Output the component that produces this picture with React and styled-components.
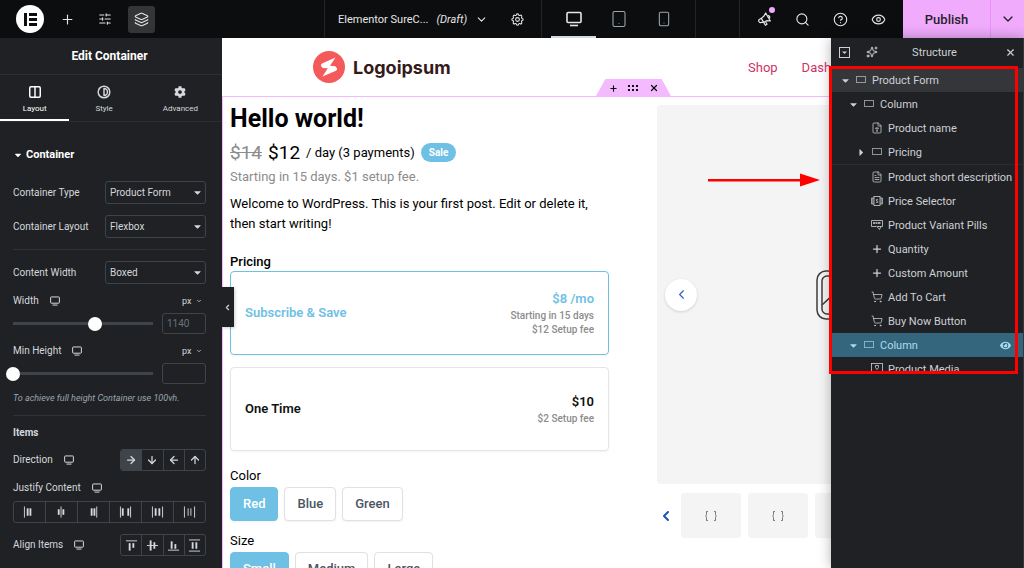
import { useState } from "react"
import styled, { createGlobalStyle } from "styled-components"
import {
    ArrowDown, ArrowLeft, ArrowRight, ArrowUp, ChevronDown, ChevronLeft, CircleQuestionMark, Columns2, Contrast,
    Eye, FileText, FileType, Layers, Plus, Search, ShoppingCart, SlidersHorizontal, Smartphone, Sparkles,
    Tablet, X
} from "lucide-react"
import { FaCaretDown, FaCaretRight, FaCog, FaEye } from "react-icons/fa"

const GlobalStyle = createGlobalStyle`
    * {
        box-sizing: border-box;
    }

    body {
        margin: 0;
        font-family: Roboto, "Liberation Sans", sans-serif;
        background-color: #fff;
    }

    button, input, select {
        font: inherit;
        color: inherit;
    }

    h1, h2, h3, p, ul {
        margin: 0;
        padding: 0;
    }

    svg {
        display: block;
        flex-shrink: 0;
    }
`

const JUSTIFY = [
    { name: "Start", bars: [[1, 0, 1, 12], [4, 2, 2, 8], [7, 2, 2, 8]] },
    { name: "Center", bars: [[3, 3, 2, 6], [6, 0, 1, 12], [8, 3, 2, 6]] },
    { name: "End", bars: [[4, 2, 2, 8], [7, 2, 2, 8], [10, 0, 1, 12]] },
    { name: "Space between", bars: [[1, 0, 1, 12], [3, 2, 2, 8], [9, 2, 2, 8], [12, 0, 1, 12]] },
    { name: "Space around", bars: [[1, 0, 1, 12], [4, 2, 2, 8], [8, 2, 2, 8], [12, 0, 1, 12]] },
    { name: "Space evenly", bars: [[1, 0, 1, 12], [5, 2, 1, 8], [8, 2, 1, 8], [12, 0, 1, 12]] }
]

const ALIGN = [
    { name: "Start", bars: [[1, 1, 12, 1], [4, 4, 2, 8], [8, 4, 2, 5]] },
    { name: "Center", bars: [[1, 6, 12, 1], [4, 1, 2, 11], [8, 3, 2, 7]] },
    { name: "End", bars: [[1, 11, 12, 1], [4, 2, 2, 8], [8, 5, 2, 5]] },
    { name: "Stretch", bars: [[1, 0, 12, 1], [4, 3, 2, 7], [8, 3, 2, 7], [1, 12, 12, 1]] }
]

const DIRECTIONS = [
    { name: "Row", Icon: ArrowRight },
    { name: "Column", Icon: ArrowDown },
    { name: "Row reversed", Icon: ArrowLeft },
    { name: "Column reversed", Icon: ArrowUp }
]

const TREE = [
    { name: "Product Form", level: 0, open: true, icon: "container", tone: "hover" },
    { name: "Column", level: 1, open: true, icon: "container" },
    { name: "Product name", level: 2, icon: "name" },
    { name: "Pricing", level: 2, open: false, icon: "container" },
    { name: "Product short description", level: 2, icon: "text", divided: true },
    { name: "Price Selector", level: 2, icon: "price" },
    { name: "Product Variant Pills", level: 2, icon: "pills" },
    { name: "Quantity", level: 2, icon: "plus" },
    { name: "Custom Amount", level: 2, icon: "plus" },
    { name: "Add To Cart", level: 2, icon: "cart" },
    { name: "Buy Now Button", level: 2, icon: "cart" },
    { name: "Column", level: 1, open: true, icon: "container", tone: "selected" },
    { name: "Product Media", level: 2, icon: "media" }
]

function BarsIcon({ bars }) {
    return (
        <svg width="13" height="13" viewBox="0 0 14 13" fill="currentColor">
            {bars.map(([x, y, width, height]) => (
                <rect key={`${x}-${y}`} x={x} y={y} width={width} height={height} />
            ))}
        </svg>
    )
}

function DesktopIcon({ size = 10 }) {
    return (
        <svg width={size} height={size} viewBox="0 0 16 16" fill="none" stroke="currentColor" strokeWidth="1.6">
            <rect x="1" y="1.5" width="14" height="10" rx="1" />
            <path d="M4 14.5h8" />
        </svg>
    )
}

function GearIcon() {
    return (
        <svg width="15" height="15" viewBox="0 0 24 24" fill="none" stroke="currentColor" strokeWidth="1.7">
            <path d="M10.3 4.3c.4-1.8 3-1.8 3.4 0a1.7 1.7 0 0 0 2.6 1.1c1.5-1 3.3.8 2.4 2.3a1.7 1.7 0 0 0 1 2.6c1.8.4 1.8 3 0 3.4a1.7 1.7 0 0 0-1 2.6c.9 1.5-.9 3.3-2.4 2.4a1.7 1.7 0 0 0-2.6 1c-.4 1.8-3 1.8-3.4 0a1.7 1.7 0 0 0-2.6-1c-1.5.9-3.3-.9-2.4-2.4a1.7 1.7 0 0 0-1-2.6c-1.8-.4-1.8-3 0-3.4a1.7 1.7 0 0 0 1-2.6c-.9-1.5.9-3.3 2.4-2.3 1 .6 2.3 0 2.6-1.1z" />
            <circle cx="12" cy="12" r="3" />
        </svg>
    )
}

function MegaphoneIcon() {
    return (
        <svg width="16" height="16" viewBox="0 0 24 24" fill="none" stroke="currentColor" strokeWidth="1.8" strokeLinejoin="round">
            <path d="M13 3l7 12-5.500-.5L10 17l-3.500-6 4-3.500z" />
            <path d="M6.500 11l-3 1.800a2 2 0 0 0-.7 2.700l.6 1a2 2 0 0 0 2.700.7L10 17M10 17l2.500 4.500 2.500-1.500-2-4M16 7a2.500 2.500 0 0 1 2.500 4" />
        </svg>
    )
}

function CollapseAllIcon() {
    return (
        <svg width="11" height="11" viewBox="0 0 11 11" fill="none" stroke="currentColor">
            <rect x="0.5" y="0.5" width="10" height="10" />
            <path d="M3 4.500h5L5.500 7z" fill="currentColor" stroke="none" />
        </svg>
    )
}

function TreeIcon({ name }) {
    if (name === "name") return <FileType size={12} strokeWidth={1.5} />
    if (name === "text") return <FileText size={12} strokeWidth={1.5} />
    if (name === "plus") return <Plus size={12} strokeWidth={2.5} />
    if (name === "cart") return <ShoppingCart size={12} strokeWidth={1.5} />
    return (
        <svg width="12" height="12" viewBox="0 0 12 12" fill="none" stroke="currentColor">
            {name === "container" && (
                <>
                    <rect x="1.500" y="2.500" width="9" height="6" strokeOpacity="0.5" />
                    <rect x="1.500" y="2.500" width="9" height="6" strokeOpacity="0.6" strokeDasharray="1 1" />
                </>
            )}
            {name === "price" && (
                <>
                    <rect x="3" y="1.500" width="6" height="9" strokeWidth="0.8" />
                    <path d="M3 3H.5v6H3M9 3h2.500v6H9M7 4.500H5.500V6H6.800v1.500H5M1.800 3v6M10.200 3v6" strokeWidth="0.7" />
                </>
            )}
            {name === "pills" && (
                <>
                    <path d="M5.500 7.500H.500v-6h11v6H10M6 7.500h4L8.500 10.500z" strokeWidth="0.8" />
                    <path d="M2 4h8" strokeWidth="1.500" strokeDasharray="2 0.500" />
                </>
            )}
            {name === "media" && (
                <>
                    <rect x="0.500" y="0.500" width="11" height="11" strokeWidth="0.8" />
                    <path d="M4.500 2.500h3v2L6 6.500 4.500 4.500zM2 10l2-2 2 2 2-2 2 2" strokeWidth="0.800" />
                </>
            )}
        </svg>
    )
}

function TopBar() {
    return (
        <Bar>
            <BarStart>
                <Brand href="#" aria-label="Elementor">
                    <svg width="13" height="13" viewBox="0 0 13 13" fill="#0c0d0e">
                        <path d="M0 0h3v13H0zM5 0h8v3H5zM5 5h8v3H5zM5 10h8v3H5z" />
                    </svg>
                </Brand>
                <IconButton aria-label="Add element"><Plus size={15} strokeWidth={1.8} /></IconButton>
                <IconButton aria-label="Site settings"><SlidersHorizontal size={14} strokeWidth={1.8} /></IconButton>
                <IconButton aria-label="Structure" $active><Layers size={15} strokeWidth={1.8} /></IconButton>
            </BarStart>
            <DocumentGroup>
                <DocumentButton>
                    Elementor SureC... <em>(Draft)</em> <ChevronDown size={13} />
                </DocumentButton>
                <IconButton aria-label="Page settings"><GearIcon /></IconButton>
            </DocumentGroup>
            <Devices>
                <DeviceButton aria-label="Desktop" $active><DesktopIcon size={16} /></DeviceButton>
                <DeviceButton aria-label="Tablet"><Tablet size={18} strokeWidth={1.4} /></DeviceButton>
                <DeviceButton aria-label="Mobile"><Smartphone size={16} strokeWidth={1.6} /></DeviceButton>
            </Devices>
            <BarSpacer />
            <BarEnd>
                <IconButton aria-label="What's new"><MegaphoneIcon /><Dot /></IconButton>
                <IconButton aria-label="Finder"><Search size={15} strokeWidth={1.8} /></IconButton>
                <IconButton aria-label="Help"><CircleQuestionMark size={15} strokeWidth={1.8} /></IconButton>
                <IconButton aria-label="Preview"><Eye size={15} strokeWidth={1.8} /></IconButton>
            </BarEnd>
            <PublishButton>Publish</PublishButton>
            <PublishMenu aria-label="Save options"><ChevronDown size={16} /></PublishMenu>
        </Bar>
    )
}

function SelectField({ id, label, value }) {
    return (
        <Field>
            <Label htmlFor={id}>{label}</Label>
            <SelectWrap>
                <Select id={id} defaultValue={value}>
                    <option>{value}</option>
                </Select>
                <FaCaretDown size={11} />
            </SelectWrap>
        </Field>
    )
}

function SliderField({ id, label, start, placeholder }) {
    const [value, setValue] = useState(start)

    return (
        <SliderGroup>
            <Field>
                <Label htmlFor={id}>{label} <DesktopIcon /></Label>
                <UnitWrap>
                    <Unit aria-label={`${label} unit`} defaultValue="px">
                        <option>px</option>
                    </Unit>
                    <ChevronDown size={6} strokeWidth={3} />
                </UnitWrap>
            </Field>
            <SliderRow>
                <Range id={id} type="range" min="0" max="1000" value={value} onChange={(e) => setValue(e.target.value)} />
                <NumberBox type="text" aria-label={`${label} value`} placeholder={placeholder} />
            </SliderRow>
        </SliderGroup>
    )
}

function EditPanel() {
    return (
        <Sidebar>
            <PanelTitle>Edit Container</PanelTitle>
            <Tabs>
                <Tab $active><Columns2 size={14} strokeWidth={2.5} />Layout</Tab>
                <Tab><Contrast size={14} strokeWidth={2.5} />Style</Tab>
                <Tab><FaCog size={12} />Advanced</Tab>
            </Tabs>
            <Controls>
                <SectionToggle><FaCaretDown size={10} />Container</SectionToggle>
                <SelectField id="type" label="Container Type" value="Product Form" />
                <SelectField id="layout" label="Container Layout" value="Flexbox" />
                <Divider />
                <SelectField id="content-width" label="Content Width" value="Boxed" />
                <SliderField id="width" label="Width" start={585} placeholder="1140" />
                <SliderField id="min-height" label="Min Height" start={0} />
                <Hint>To achieve full height Container use 100vh.</Hint>
                <Divider />
                <GroupTitle>Items</GroupTitle>
                <Field>
                    <Label as="span">Direction <DesktopIcon /></Label>
                    <Choices>
                        {DIRECTIONS.map(({ name, Icon }, index) => (
                            <Choice key={name} aria-label={name} $active={index === 0}>
                                <Icon size={12} strokeWidth={2.5} />
                            </Choice>
                        ))}
                    </Choices>
                </Field>
                <Stack>
                    <Label as="span">Justify Content <DesktopIcon /></Label>
                    <Choices $wide>
                        {JUSTIFY.map((item) => (
                            <Choice key={item.name} aria-label={item.name}><BarsIcon bars={item.bars} /></Choice>
                        ))}
                    </Choices>
                </Stack>
                <Field>
                    <Label as="span">Align Items <DesktopIcon /></Label>
                    <Choices>
                        {ALIGN.map((item) => (
                            <Choice key={item.name} aria-label={item.name}><BarsIcon bars={item.bars} /></Choice>
                        ))}
                    </Choices>
                </Field>
            </Controls>
        </Sidebar>
    )
}

function Canvas() {
    const [plan, setPlan] = useState("subscribe")

    return (
        <Preview>
            <Page>
                <SiteHeader>
                    <SiteLogo href="#">
                        <svg width="32" height="32" viewBox="0 0 32 32">
                            <circle cx="16" cy="16" r="16" fill="#f55a5a" />
                            <path d="M22.500 6.500L9 12.500q-1.800 1-.8 2.700l1.600 1.800 5 .3-5.300 8.200L23 19.700q1.900-1 .8-2.700l-1.500-1.800-5.300-.4z" fill="#fff" />
                        </svg>
                        Logoipsum
                    </SiteLogo>
                    <SiteNav>
                        <a href="#">Shop</a>
                        <a href="#">Dashboard</a>
                    </SiteNav>
                </SiteHeader>
                <FormContainer>
                    <Handle>
                        <HandleButton aria-label="Add container"><Plus size={9} strokeWidth={3} /></HandleButton>
                        <HandleButton aria-label="Edit container">
                            <svg width="11" height="6" viewBox="0 0 11 6" fill="currentColor">
                                <path d="M0 0h2v2H0zM4 0h2v2H4zM8 0h2v2H8zM0 4h2v2H0zM4 4h2v2H4zM8 4h2v2H8z" />
                            </svg>
                        </HandleButton>
                        <HandleButton aria-label="Delete container"><X size={10} strokeWidth={3} /></HandleButton>
                    </Handle>
                    <ProductInfo>
                        <ProductTitle>Hello world!</ProductTitle>
                        <PriceRow>
                            <del>$14</del>
                            <ins>$12</ins>
                            <span>/ day (3 payments)</span>
                            <Sale>Sale</Sale>
                        </PriceRow>
                        <Muted>Starting in 15 days. $1 setup fee.</Muted>
                        <Description>
                            Welcome to WordPress. This is your first post. Edit or delete it, then start writing!
                        </Description>
                        <FieldTitle $strong>Pricing</FieldTitle>
                        <Plans>
                            <Plan $checked={plan === "subscribe"}>
                                <input type="radio" name="plan" checked={plan === "subscribe"} onChange={() => setPlan("subscribe")} />
                                <PlanName>Subscribe &amp; Save</PlanName>
                                <PlanPrice>
                                    <PlanName>$8 /mo</PlanName>
                                    <small>Starting in 15 days</small>
                                    <small>$12 Setup fee</small>
                                </PlanPrice>
                            </Plan>
                            <Plan $checked={plan === "once"}>
                                <input type="radio" name="plan" checked={plan === "once"} onChange={() => setPlan("once")} />
                                <PlanName>One Time</PlanName>
                                <PlanPrice>
                                    <PlanName>$10</PlanName>
                                    <small>$2 Setup fee</small>
                                </PlanPrice>
                            </Plan>
                        </Plans>
                        <FieldTitle>Color</FieldTitle>
                        <Pills>
                            <Pill $active>Red</Pill>
                            <Pill>Blue</Pill>
                            <Pill>Green</Pill>
                        </Pills>
                        <FieldTitle>Size</FieldTitle>
                        <Pills>
                            <Pill $active>Small</Pill>
                            <Pill>Medium</Pill>
                            <Pill>Large</Pill>
                        </Pills>
                    </ProductInfo>
                    <Gallery>
                        <MainImage>
                            <PrevButton aria-label="Previous image"><ChevronLeft size={15} strokeWidth={1.8} /></PrevButton>
                            <svg width="62" height="50" viewBox="0 0 62 50" fill="none" stroke="#3c3c3c" strokeWidth="1.500">
                                <rect x="1" y="1" width="60" height="48" rx="9" />
                                <rect x="6" y="6" width="50" height="38" rx="5" />
                                <path d="M6 35l14-13 12 12 8-7 16 13" />
                                <circle cx="42" cy="17" r="4" />
                            </svg>
                        </MainImage>
                        <Thumbs>
                            <ThumbArrow aria-label="Previous thumbnails"><ChevronLeft size={16} strokeWidth={3} /></ThumbArrow>
                            {[1, 2, 3, 4].map((item) => (
                                <Thumb key={item}>
                                    <svg width="12" height="10" viewBox="0 0 12 10" fill="none" stroke="#777">
                                        <path d="M3 .500H1.500v3L.800 5l.700 1.500v3H3M9 .500h1.500v3l.7 1.500-.7 1.500v3H9" />
                                    </svg>
                                </Thumb>
                            ))}
                        </Thumbs>
                    </Gallery>
                </FormContainer>
            </Page>
            <CollapseButton aria-label="Hide panel"><ChevronLeft size={9} strokeWidth={3} /></CollapseButton>
        </Preview>
    )
}

function StructurePanel() {
    return (
        <Structure>
            <StructureHeader>
                <PlainButton aria-label="Collapse all"><CollapseAllIcon /></PlainButton>
                <PlainButton aria-label="Generate with AI"><Sparkles size={12} /></PlainButton>
                <h2>Structure</h2>
                <PlainButton aria-label="Close structure"><X size={11} strokeWidth={2.5} /></PlainButton>
            </StructureHeader>
            <Tree>
                {TREE.map((item, index) => (
                    <TreeRow key={index} $level={item.level} $tone={item.tone} $divided={item.divided}>
                        <Caret>
                            {item.open === true && <FaCaretDown size={11} />}
                            {item.open === false && <FaCaretRight size={11} />}
                        </Caret>
                        <TreeIcon name={item.icon} />
                        <TreeName>{item.name}</TreeName>
                        {item.tone === "selected" && <FaEye size={11} />}
                    </TreeRow>
                ))}
            </Tree>
            <Highlight />
            <Pointer width="112" height="14" viewBox="0 0 112 14" fill="#f00">
                <path d="M0 6h93v2.500H0zM92 .500L112 7 92 13.500z" />
            </Pointer>
        </Structure>
    )
}

export default function App() {
    return (
        <Editor>
            <GlobalStyle />
            <TopBar />
            <Workspace>
                <EditPanel />
                <Canvas />
                <StructurePanel />
            </Workspace>
        </Editor>
    )
}

const Editor = styled.div`
    display: flex;
    flex-direction: column;
    height: 100vh;
    overflow: hidden;
`

const Workspace = styled.div`
    display: flex;
    flex: 1;
    min-height: 0;
`

/* Top bar */

const Bar = styled.header`
    display: flex;
    flex-shrink: 0;
    height: 38px;
    background-color: #0c0d0e;
    color: #e6e6e6;
`

const BarStart = styled.div`
    display: flex;
    flex: 1;
    align-items: center;
    gap: 10px;
    padding-left: 16px;
`

const Brand = styled.a`
    display: flex;
    align-items: center;
    justify-content: center;
    width: 28px;
    height: 28px;
    border-radius: 50%;
    background-color: #fff;
`

const IconButton = styled.button`
    position: relative;
    display: flex;
    align-items: center;
    justify-content: center;
    width: 27px;
    height: 27px;
    padding: 0;
    border: 0;
    border-radius: 3px;
    background-color: ${(props) => (props.$active ? "#343537" : "transparent")};
`

const DocumentGroup = styled.div`
    display: flex;
    align-items: center;
    justify-content: space-between;
    width: 217px;
    padding: 0 10px 0 13px;
    border-left: 1px solid #232426;
`

const DocumentButton = styled.button`
    display: flex;
    align-items: center;
    gap: 8px;
    padding: 0;
    border: 0;
    background-color: transparent;
    font-size: 11px;
    white-space: nowrap;
`

const Devices = styled.div`
    display: flex;
    width: 155px;
    padding: 0 9px;
    border: 1px solid #232426;
    border-width: 0 1px;
`

const DeviceButton = styled.button`
    display: flex;
    flex: 1;
    align-items: center;
    justify-content: center;
    padding: 1px 0 0;
    border: 0;
    border-bottom: 2px solid ${(props) => (props.$active ? "#d5d8dc" : "transparent")};
    background-color: transparent;
    color: ${(props) => (props.$active ? "#e6e6e6" : "#9da5ae")};
`

const BarSpacer = styled.div`
    width: 43px;
`

const BarEnd = styled.div`
    display: flex;
    align-items: center;
    gap: 11px;
    padding: 0 11px;
    border-left: 1px solid #232426;
`

const Dot = styled.span`
    position: absolute;
    top: 1px;
    right: 3px;
    width: 6px;
    height: 6px;
    border-radius: 50%;
    background-color: #f0abfc;
`

const PublishButton = styled.button`
    width: 87px;
    padding: 0;
    border: 0;
    background-color: #f0abfc;
    color: #26202a;
    font-size: 13px;
    font-weight: 500;
`

const PublishMenu = styled.button`
    display: flex;
    align-items: center;
    justify-content: center;
    width: 34px;
    padding: 0;
    border: 0;
    border-left: 1px solid #eb8efb;
    background-color: #f0abfc;
    color: #26202a;
`

/* Left panel */

const Sidebar = styled.aside`
    flex-shrink: 0;
    width: 222px;
    background-color: #1f2124;
    color: #d5d8dc;
    font-size: 10px;
    overflow: hidden;
`

const PanelTitle = styled.h2`
    padding-right: 3px;
    color: #fff;
    font-size: 12px;
    font-weight: 700;
    line-height: 36px;
    text-align: center;
`

const Tabs = styled.div`
    display: grid;
    grid-template-columns: 5fr 5fr 6fr;
    height: 48px;
    border: 1px solid #2c2f34;
    border-width: 1px 0;
`

const Tab = styled.button`
    display: flex;
    flex-direction: column;
    align-items: center;
    justify-content: center;
    gap: 5px;
    padding: 3px 0 0;
    border: 0;
    border-bottom: 2px solid ${(props) => (props.$active ? "#fff" : "transparent")};
    background-color: transparent;
    color: ${(props) => (props.$active ? "#fff" : "#d5d8dc")};
    font-size: 8px;

    svg {
        height: 14px;
    }
`

const Controls = styled.div`
    display: flex;
    flex-direction: column;
    gap: 11px;
    padding: 22px 16px 0 13px;
`

const SectionToggle = styled.button`
    display: flex;
    align-items: center;
    gap: 3px;
    margin-bottom: 4px;
    padding: 0;
    border: 0;
    background-color: transparent;
    color: #fff;
    font-size: 11px;
    font-weight: 700;
    line-height: 22px;
`

const Field = styled.div`
    display: flex;
    align-items: center;
    justify-content: space-between;
`

const Label = styled.label`
    display: flex;
    align-items: center;
    gap: 11px;
    line-height: 12px;
    white-space: nowrap;
`

const SelectWrap = styled.div`
    position: relative;
    width: 101px;

    svg {
        position: absolute;
        top: 6px;
        right: 3px;
        pointer-events: none;
    }
`

const Select = styled.select`
    display: block;
    width: 100%;
    height: 23px;
    padding: 0 4px;
    border: 1px solid #3f444b;
    border-radius: 3px;
    background-color: transparent;
    appearance: none;
`

const Divider = styled.hr`
    width: 100%;
    height: 1px;
    margin: 0;
    border: 0;
    background-color: #2f3237;
`

const SliderGroup = styled.div`
    display: flex;
    flex-direction: column;
    gap: 6px;
`

const UnitWrap = styled.span`
    display: flex;
    align-items: center;
    gap: 4px;
    height: 12px;
    padding-right: 4px;
`

const Unit = styled.select`
    height: 12px;
    padding: 0;
    border: 0;
    background-color: transparent;
    font-size: 9px;
    line-height: 12px;
    appearance: none;
`

const SliderRow = styled.div`
    display: flex;
    align-items: center;
    justify-content: space-between;
    gap: 16px;
`

/* the margins let the thumb hang over both ends of the track */
const Range = styled.input`
    flex: 1;
    min-width: 0;
    height: 14px;
    margin: 0 -7px;
    background: linear-gradient(#3f444b, #3f444b) center / calc(100% - 14px) 3px no-repeat;
    appearance: none;

    &::-webkit-slider-thumb {
        width: 14px;
        height: 14px;
        border-radius: 50%;
        background-color: #fff;
        appearance: none;
    }
`

const NumberBox = styled.input`
    width: 44px;
    height: 21px;
    margin-left: -7px;
    padding: 0 4px;
    border: 1px solid #3f444b;
    border-radius: 3px;
    background-color: transparent;

    &::placeholder {
        color: #69727d;
    }
`

const Hint = styled.p`
    margin-top: -3px;
    color: #9da5ae;
    font-size: 9px;
    font-style: italic;
    line-height: 12px;
`

const GroupTitle = styled.h3`
    font-size: 10px;
    font-weight: 700;
    line-height: 11px;
`

const Stack = styled.div`
    display: flex;
    flex-direction: column;
    gap: 7px;
`

const Choices = styled.div`
    display: flex;
    width: ${(props) => (props.$wide ? "100%" : "86px")};
    height: 22px;
    border: 1px solid #3f444b;
    border-radius: 3px;
    overflow: hidden;
`

const Choice = styled.button`
    display: flex;
    flex: 1;
    align-items: center;
    justify-content: center;
    padding: 0;
    border: 0;
    background-color: ${(props) => (props.$active ? "#3f444b" : "transparent")};

    & + & {
        border-left: 1px solid #3f444b;
    }
`

/* Page preview */

const Preview = styled.main`
    position: relative;
    flex: 1;
    min-width: 0;
    background-color: #fff;
    overflow: hidden;
`

/* the page runs on underneath the structure panel */
const Page = styled.div`
    margin-right: -213px;
`

const SiteHeader = styled.header`
    display: grid;
    grid-template-columns: 1fr 1fr;
    gap: 48px;
    align-items: center;
    height: 58px;
    padding: 0 8px;
`

const SiteLogo = styled.a`
    display: flex;
    align-items: center;
    gap: 8px;
    padding-left: 83px;
    color: #351a1a;
    font-family: Inter, "Liberation Sans", sans-serif;
    font-size: 18px;
    font-weight: 700;
    text-decoration: none;
`

const SiteNav = styled.nav`
    display: flex;
    gap: 24px;
    padding-left: 91px;
    font-size: 13px;

    a {
        color: #cc3366;
        text-decoration: none;
    }
`

const FormContainer = styled.section`
    position: relative;
    display: grid;
    grid-template-columns: 1fr 1fr;
    gap: 48px;
    padding: 8px 8px 8px 7px;
    border-top: 1px solid #f3bafd;
    border-left: 1px solid #f3bafd;
`

const Handle = styled.div`
    position: absolute;
    top: -18px;
    left: 50%;
    display: flex;
    align-items: center;
    justify-content: center;
    gap: 10px;
    width: 76px;
    height: 18px;
    background-color: #f3bafd;
    clip-path: polygon(13% 0, 87% 0, 100% 100%, 0 100%);
    transform: translateX(-50%);
`

const HandleButton = styled.button`
    padding: 0;
    border: 0;
    background-color: transparent;
    color: #0c0d0e;
`

const ProductInfo = styled.div`
    min-width: 0;
    padding-top: 1px;
    color: #000;
    font-size: 13px;
    line-height: 20px;
`

const ProductTitle = styled.h1`
    font-size: 25px;
    font-weight: 700;
    line-height: 26px;
`

const PriceRow = styled.div`
    display: flex;
    align-items: center;
    gap: 6px;
    height: 27px;
    margin-top: 7px;

    del, ins {
        font-size: 19px;
        text-decoration: none;
    }

    del {
        color: #8c8c8c;
        text-decoration: line-through;
    }
`

const Sale = styled.span`
    padding: 0 8px;
    border-radius: 10px;
    background-color: #6ec1e4;
    color: #fff;
    font-size: 10px;
    font-weight: 700;
    line-height: 19px;
`

const Muted = styled.p`
    margin-top: 1px;
    color: #8c8c8c;
`

const Description = styled.p`
    margin: 7px 0 17px;
`

const FieldTitle = styled.h3`
    padding-top: 2px;
    font-size: 13px;
    font-weight: ${(props) => (props.$strong ? 500 : 400)};
    line-height: 18px;
`

const Plans = styled.div`
    display: grid;
    gap: 12px;
    margin-bottom: 14px;
`

const Plan = styled.label`
    position: relative;
    display: flex;
    align-items: center;
    justify-content: space-between;
    height: 84px;
    padding: 0 14px;
    border: 1px solid ${(props) => (props.$checked ? "#6ec1e4" : "#e4e4e9")};
    border-radius: 4px;
    color: ${(props) => (props.$checked ? "#6ec1e4" : "#111")};
    box-shadow: 0 1px 2px rgba(0, 0, 0, 0.05);

    input {
        position: absolute;
        opacity: 0;
    }
`

const PlanName = styled.strong`
    font-weight: 600;
`

const PlanPrice = styled.span`
    display: flex;
    flex-direction: column;
    align-items: flex-end;

    small {
        color: #8c8c8c;
        font-size: 10px;
        font-weight: 500;
        line-height: 14px;
    }
`

const Pills = styled.div`
    display: flex;
    gap: 6px;
    margin: 2px 0 9px;
`

const Pill = styled.button`
    height: 34px;
    padding: 0 12px;
    border: 1px solid ${(props) => (props.$active ? "#6ec1e4" : "#e0e0e6")};
    border-radius: 4px;
    background-color: ${(props) => (props.$active ? "#6ec1e4" : "#fff")};
    color: ${(props) => (props.$active ? "#fff" : "#4b5563")};
    font-weight: 500;
    box-shadow: 0 1px 2px rgba(0, 0, 0, 0.05);
`

const Gallery = styled.div`
    min-width: 0;
`

const MainImage = styled.div`
    position: relative;
    display: flex;
    align-items: center;
    justify-content: center;
    aspect-ratio: 1;
    border-radius: 4px;
    background-color: #f4f4f4;
`

const PrevButton = styled.button`
    position: absolute;
    left: 8px;
    display: flex;
    align-items: center;
    justify-content: center;
    width: 32px;
    height: 32px;
    padding: 0;
    border: 0;
    border-radius: 50%;
    background-color: #fff;
    color: #2f5bc4;
    box-shadow: 0 1px 3px rgba(0, 0, 0, 0.15);
`

const Thumbs = styled.div`
    display: flex;
    align-items: center;
    gap: 7px;
    margin-top: 9px;
    padding-left: 1px;
`

const ThumbArrow = styled.button`
    padding: 0;
    border: 0;
    background-color: transparent;
    color: #1e4fc0;
`

const Thumb = styled.div`
    display: flex;
    flex-shrink: 0;
    align-items: center;
    justify-content: center;
    width: 60px;
    height: 45px;
    border-radius: 3px;
    background-color: #f4f4f4;
`

const CollapseButton = styled.button`
    position: absolute;
    top: 249px;
    left: 0;
    width: 12px;
    height: 40px;
    padding: 0 1px;
    border: 0;
    background-color: #1f2124;
    color: #d5d8dc;
    box-shadow: 1px 1px 3px rgba(0, 0, 0, 0.2);
`

/* Structure panel */

const Structure = styled.aside`
    position: relative;
    flex-shrink: 0;
    width: 193px;
    border-right: 1px solid #33373c;
    background-color: #1f2124;
    color: #cdd0d4;
    font-size: 11px;
    box-shadow: 0 0 12px rgba(0, 0, 0, 0.3);
`

const StructureHeader = styled.div`
    display: flex;
    align-items: center;
    gap: 16px;
    height: 30px;
    padding: 0 7px 2px 8px;

    h2 {
        flex: 1;
        padding-right: 14px;
        font-size: 11px;
        font-weight: 400;
        text-align: center;
    }
`

const PlainButton = styled.button`
    padding: 0;
    border: 0;
    background-color: transparent;
`

const Tree = styled.ul`
    max-height: 306px;
    overflow: hidden;
    list-style: none;
`

const tones = {
    hover: { background: "#35363a", color: "#cdd0d4" },
    selected: { background: "#34677d", color: "#a9dcf0" }
}

const TreeRow = styled.li`
    display: flex;
    align-items: center;
    gap: 5px;
    height: ${(props) => (props.$divided ? 25 : 24)}px;
    padding: 0 12px 0 ${(props) => 9 + props.$level * 8}px;
    border-top: ${(props) => (props.$divided ? "1px solid #2b2d31" : "0")};
    background-color: ${(props) => tones[props.$tone]?.background ?? "transparent"};
    color: ${(props) => tones[props.$tone]?.color ?? "inherit"};
`

const Caret = styled.span`
    flex-shrink: 0;
    width: 10px;
`

const TreeName = styled.span`
    flex: 1;
    white-space: nowrap;
`

const Highlight = styled.div`
    position: absolute;
    top: 28px;
    right: 5px;
    left: -2px;
    height: 308px;
    border: 3px solid #f00;
    pointer-events: none;
`

const Pointer = styled.svg`
    position: absolute;
    top: 135px;
    right: calc(100% + 11px);
    pointer-events: none;
`
